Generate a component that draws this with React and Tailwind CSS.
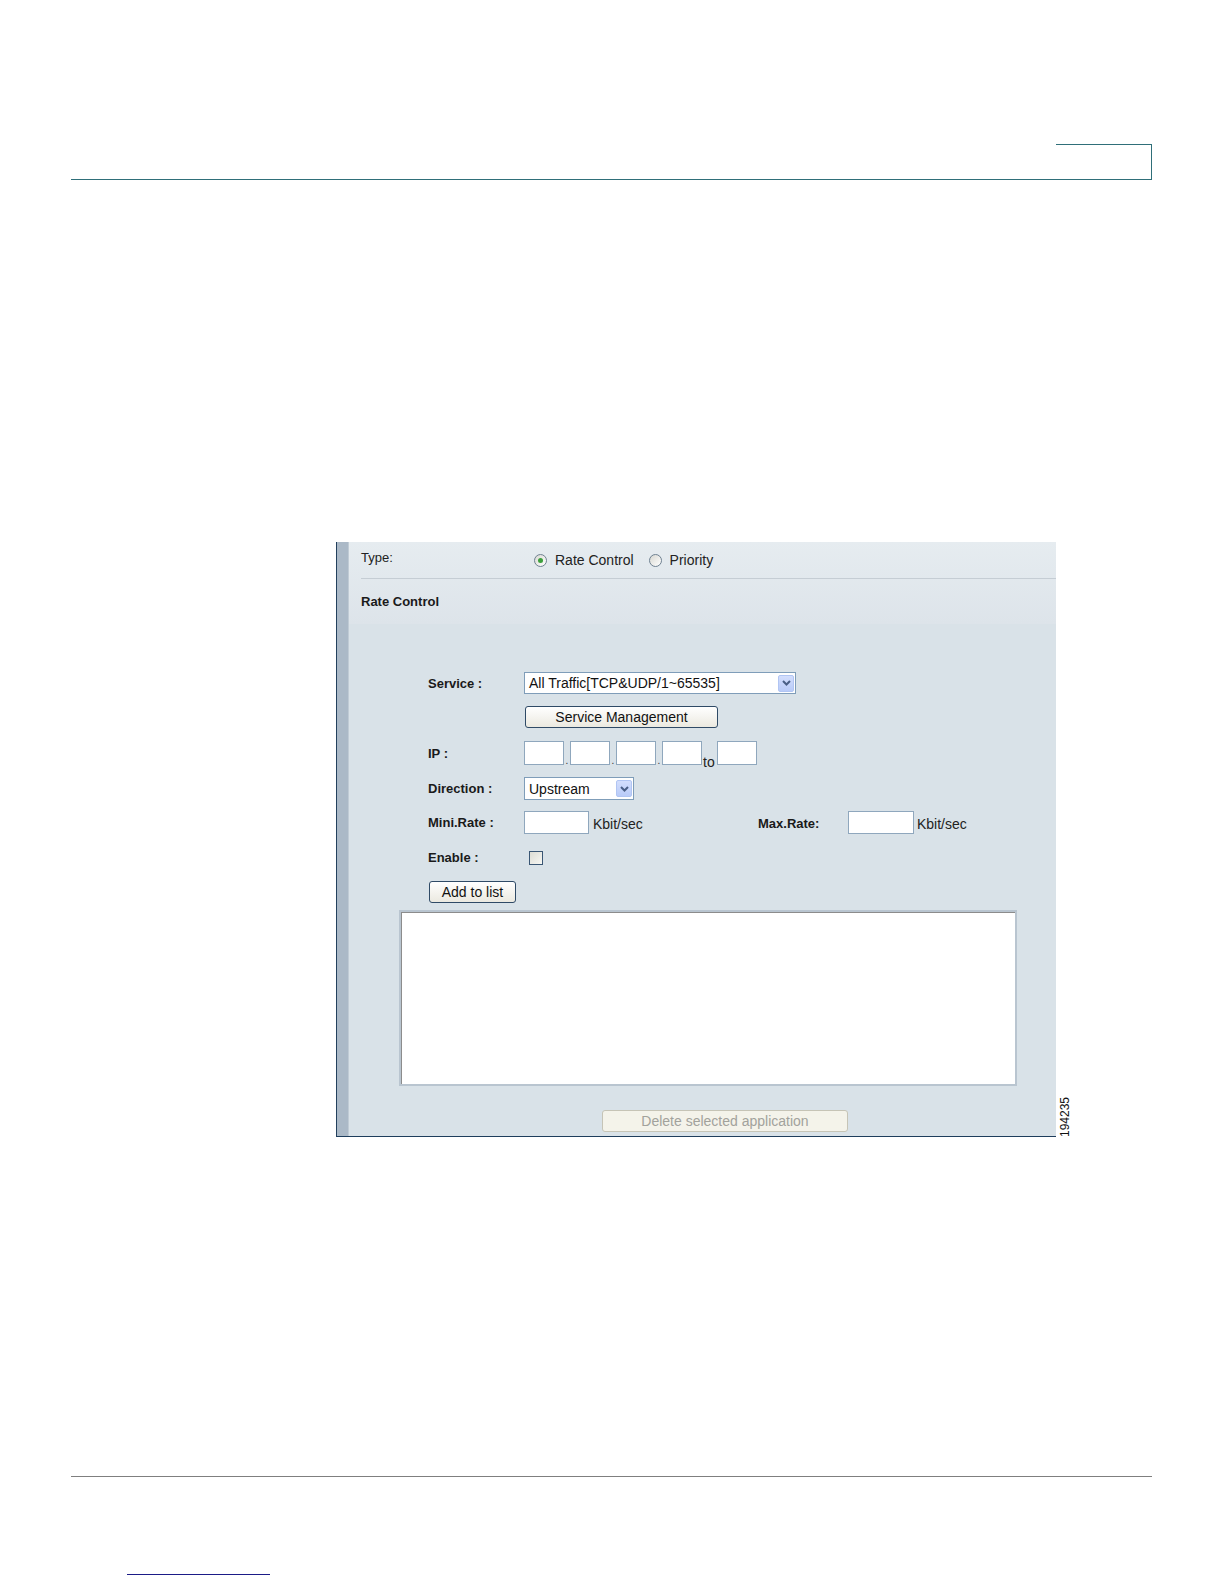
import React from 'react';

const Radio = ({ checked }) => (
    <span className="w-[13px] h-[13px] rounded-full border border-[#6f8191] bg-gradient-to-br from-[#d8d8d2] to-white flex items-center justify-center shrink-0">
        {checked && <span className="w-[5px] h-[5px] rounded-full bg-[#3c9f3c]" />}
    </span>
);

const Arrow = () => (
    <span className="w-[16px] h-[17px] bg-gradient-to-b from-[#d3defd] to-[#b9cbf8] border border-[#b1c5f3] rounded-[2px] flex items-center justify-center shrink-0">
        <svg width="9" height="6" viewBox="0 0 9 6">
            <path d="M1 1 L4.5 4.5 L8 1" fill="none" stroke="#4a5f86" strokeWidth="2" />
        </svg>
    </span>
);

const Select = ({ value, width }) => (
    <div className={`${width} h-full bg-white border border-[#7f9db9] flex items-center justify-between pl-[4px] pr-[1px]`}>
        <span className="text-[14px] leading-none text-[#111] whitespace-nowrap">{value}</span>
        <Arrow />
    </div>
);

const Input = ({ width }) => (
    <div className={`${width} h-full bg-white border border-[#8fa7bd]`} />
);

const Label = ({ children }) => (
    <span className="w-[96px] shrink-0 text-[13px] font-bold text-[#1a1a1a] leading-none">{children}</span>
);

const Dot = () => (
    <span className="w-[6px] self-end text-[10px] leading-[8px] text-center text-[#333]">.</span>
);

const Button = ({ children, width, disabled }) => (
    <div
        className={
            disabled
                ? `${width} h-[22px] rounded-[3px] border border-[#c6c4b6] bg-[#f4f3ea] flex items-center justify-center text-[14px] text-[#a2a29c]`
                : `${width} h-[22px] rounded-[3px] border border-[#2f4a66] bg-gradient-to-b from-white to-[#ebe9e0] flex items-center justify-center text-[14px] text-[#111]`
        }
    >
        {children}
    </div>
);

export default function App() {
    return (
        <div className="w-full h-[1584px] bg-white overflow-hidden font-['Liberation_Sans',Arial,sans-serif]">
            {/* Header rule */}
            <div className="pt-[144px] ml-[71px] w-[1081px]">
                <div className="h-[35px] flex justify-end">
                    <div className="w-[96px] h-full border-t border-r border-[#2f6f79]" />
                </div>
                <div className="h-px bg-[#2f6f79]" />
            </div>

            {/* Figure */}
            <div className="mt-[362px] ml-[336px] flex items-end">
                <div className="w-[720px] h-[595px] flex border-b border-[#1e3d5c]">
                    <div className="w-px bg-[#23405d]" />
                    <div className="w-[11px] bg-[#abb9c7]" />
                    <div className="w-px bg-[#c0cbd5]" />
                    <div className="flex-1 flex flex-col bg-[#d9e2e8]">
                        {/* Section header */}
                        <div className="h-[82px] bg-gradient-to-b from-[#e6ecf0] to-[#dde4ea]">
                            <div className="h-[36px] flex items-center pl-[12px]">
                                <span className="w-[173px] text-[13px] text-[#222] -mt-[4px]">Type:</span>
                                <Radio checked />
                                <span className="ml-[8px] text-[14px] text-[#222]">Rate Control</span>
                                <span className="ml-[15px]"><Radio /></span>
                                <span className="ml-[8px] text-[14px] text-[#222]">Priority</span>
                            </div>
                            <div className="ml-[12px] h-px bg-[#c5cdd4]" />
                            <div className="h-[45px] flex items-center pl-[12px]">
                                <span className="text-[13px] font-bold text-[#1a1a1a]">Rate Control</span>
                            </div>
                        </div>

                        {/* Form */}
                        <div className="pt-[48px] flex flex-col">
                            <div className="h-[22px] flex items-center pl-[79px]">
                                <Label>Service :</Label>
                                <Select value="All Traffic[TCP&UDP/1~65535]" width="w-[272px]" />
                            </div>

                            <div className="mt-[12px] flex items-center pl-[79px]">
                                <span className="w-[97px] shrink-0" />
                                <Button width="w-[193px]">Service Management</Button>
                            </div>

                            <div className="mt-[13px] h-[24px] flex items-center pl-[79px]">
                                <Label>IP :</Label>
                                <div className="h-full flex">
                                    <Input width="w-[40px]" />
                                    <Dot />
                                    <Input width="w-[40px]" />
                                    <Dot />
                                    <Input width="w-[40px]" />
                                    <Dot />
                                    <Input width="w-[40px]" />
                                    <span className="w-[15px] self-end text-[14px] leading-[12px] -mb-[3px] pl-[1px] text-[#222]">to</span>
                                    <Input width="w-[40px]" />
                                </div>
                            </div>

                            <div className="mt-[12px] h-[23px] flex items-center pl-[79px]">
                                <Label>Direction :</Label>
                                <Select value="Upstream" width="w-[110px]" />
                            </div>

                            <div className="mt-[11px] h-[23px] flex items-center pl-[79px]">
                                <Label>Mini.Rate :</Label>
                                <div className="w-[234px] h-full flex items-center">
                                    <Input width="w-[65px]" />
                                    <span className="ml-[4px] text-[14px] text-[#222] mt-[3px]">Kbit/sec</span>
                                </div>
                                <span className="w-[90px] text-[13px] font-bold text-[#1a1a1a] mt-[3px]">Max.Rate:</span>
                                <Input width="w-[66px]" />
                                <span className="ml-[3px] text-[14px] text-[#222] mt-[3px]">Kbit/sec</span>
                            </div>

                            <div className="mt-[16px] h-[15px] flex items-center pl-[79px]">
                                <Label>Enable :</Label>
                                <span className="ml-[5px] w-[14px] h-[14px] border border-[#3a5674] bg-gradient-to-br from-[#dcdcd4] to-[#f7f7f3]" />
                            </div>

                            <div className="mt-[16px] pl-[80px] flex">
                                <Button width="w-[87px]">Add to list</Button>
                            </div>

                            <div className="mt-[7px] ml-[50px] w-[618px] h-[176px] border-2 border-[#b9c5d0] bg-white">
                                <div className="w-full h-full border-t border-l border-[#8c8c8c]" />
                            </div>

                            <div className="mt-[24px] ml-[253px] flex">
                                <Button width="w-[246px]" disabled>Delete selected application</Button>
                            </div>
                        </div>
                    </div>
                </div>
                <span className="ml-[3px] [writing-mode:vertical-rl] rotate-180 text-[12px] leading-[12px] text-[#111]">194235</span>
            </div>

            {/* Footer */}
            <div className="mt-[339px] ml-[71px] w-[1081px] h-px bg-[#7f7f7f]" />
            <div className="mt-[97px] ml-[127px] w-[143px] h-px bg-[#1b1b87]" />
        </div>
    );
}
